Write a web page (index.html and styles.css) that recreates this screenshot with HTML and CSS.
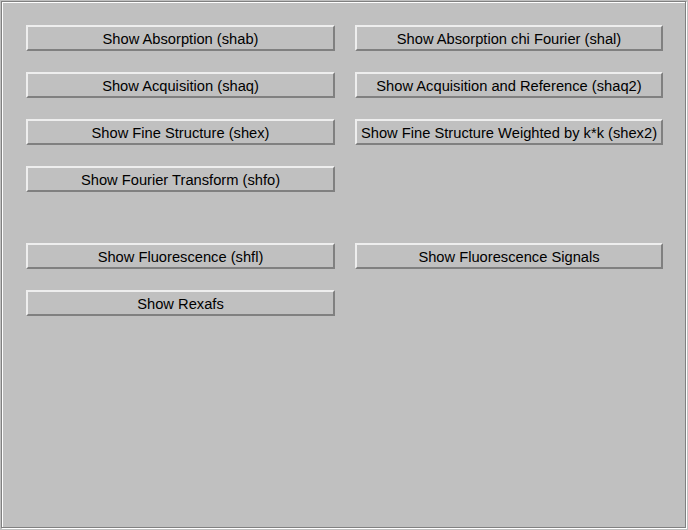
FILE: index.html
```html
<!DOCTYPE html>
<html>
<head>
<meta charset="utf-8">
<link rel="stylesheet" href="styles.css">
</head>
<body>
<div class="frame">
  <div class="grid">
    <button class="btn">Show Absorption (shab)</button>
    <button class="btn">Show Absorption chi Fourier (shal)</button>
    <button class="btn">Show Acquisition (shaq)</button>
    <button class="btn">Show Acquisition and Reference (shaq2)</button>
    <button class="btn">Show Fine Structure (shex)</button>
    <button class="btn">Show Fine Structure Weighted by k*k (shex2)</button>
    <button class="btn">Show Fourier Transform (shfo)</button>
    <div class="empty"></div>
    <div class="spacer"></div>
    <button class="btn">Show Fluorescence (shfl)</button>
    <button class="btn">Show Fluorescence Signals</button>
    <button class="btn">Show Rexafs</button>
  </div>
</div>
</body>
</html>
```
FILE: styles.css
```css
html, body {
  margin: 0;
  padding: 0;
  width: 688px;
  height: 530px;
  background: #c0c0c0;
  overflow: hidden;
}
.frame {
  box-sizing: border-box;
  margin: 1px 0 0 1px;
  width: 685px;
  height: 527px;
  border: 1px solid #808080;
  box-shadow: inset 1px 1px 0 #ffffff, 1px 1px 0 #ffffff;
  padding: 23px 0 0 24px;
}
.grid {
  display: grid;
  grid-template-columns: 309px 308px;
  column-gap: 20px;
  row-gap: 21px;
}
.btn {
  box-sizing: border-box;
  height: 26px;
  margin: 0;
  padding: 2px 0 0 0;
  background: #c0c0c0;
  border: 2px solid;
  border-color: #eeeeee #808080 #808080 #eeeeee;
  font-family: "Liberation Sans", Arial, sans-serif;
  font-size: 14.7px;
  color: #000;
  text-align: center;
  line-height: 20px;
  white-space: nowrap;
  overflow: hidden;
}
.spacer {
  grid-column: 1 / 3;
  height: 9px;
}
```
